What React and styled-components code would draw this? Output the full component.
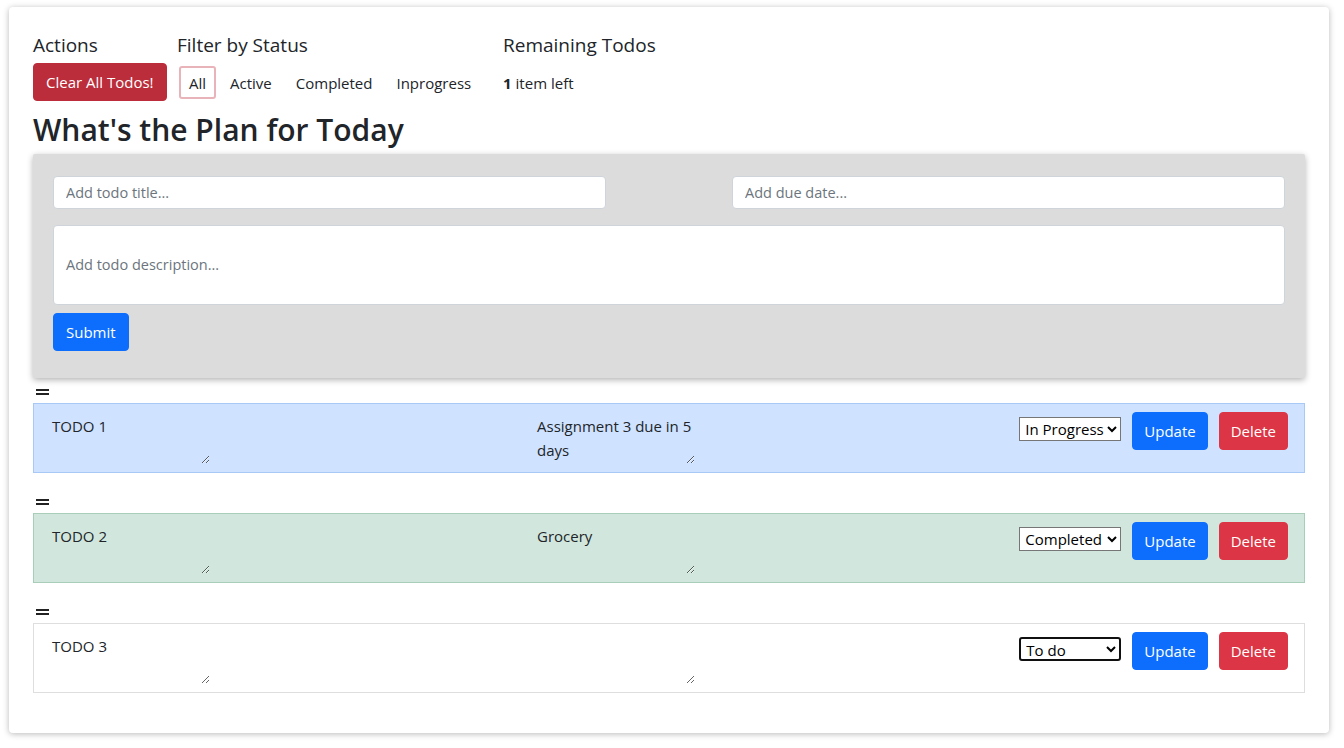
import React from "react";
import styled, { createGlobalStyle } from "styled-components";

const Global = createGlobalStyle`
  html, body { margin: 0; padding: 0; background: #ffffff; }
  body {
    font-family: "Open Sans", "Noto Sans", sans-serif;
    color: #212529;
    font-size: 15px;
  }
  * { box-sizing: border-box; }
`;

const Page = styled.div`
  padding: 7px 0 14px 9px;
`;

const Card = styled.div`
  width: 1320px;
  min-height: 726px;
  background: #fff;
  border-radius: 4px;
  box-shadow: 0 1px 6px rgba(0, 0, 0, 0.28);
  padding: 26px 24px 25px;
`;

const TopBar = styled.div`
  display: grid;
  grid-template-columns: 144px 326px auto;
`;

const Section = styled.div`
  display: flex;
  flex-direction: column;
`;

const SectionTitle = styled.h5`
  margin: 0 0 6px;
  font-size: 19px;
  font-weight: 500;
  line-height: 24px;
`;

const Button = styled.button`
  font-family: inherit;
  font-size: 15px;
  line-height: 24px;
  padding: 6px ${(p) => (p.$px ? p.$px : 12)}px;
  height: 38px;
  border-radius: 4px;
  border: 1px solid ${(p) => p.$bg};
  background: ${(p) => p.$bg};
  color: #fff;
  cursor: pointer;
  white-space: nowrap;
`;

const FilterRow = styled.div`
  display: flex;
  align-items: center;
  gap: 4px;
  height: 38px;
  padding: 1px 0 0 2px;
`;

const FilterButton = styled.button`
  font-family: inherit;
  font-size: 15px;
  color: #212529;
  background: transparent;
  height: 33px;
  padding: 0 8px;
  border-radius: 3px;
  border: 2px solid ${(p) => (p.$active ? "#e8b4b9" : "transparent")};
  cursor: pointer;
`;

const Remaining = styled.div`
  height: 38px;
  display: flex;
  align-items: center;
  padding-top: 1px;
  font-size: 15px;
  b { font-weight: 700; margin-right: 4px; }
`;

const Heading = styled.h2`
  margin: 11px 0 6px;
  font-size: 30px;
  font-weight: 600;
  line-height: 36px;
`;

const FormCard = styled.form`
  background: #dcdcdc;
  border-radius: 2px;
  box-shadow: 0 2px 6px rgba(0, 0, 0, 0.3);
  padding: 22px 20px 27px;
  display: flex;
  flex-direction: column;
`;

const InputGrid = styled.div`
  display: grid;
  grid-template-columns: 553px 553px;
  justify-content: space-between;
  margin-bottom: 16px;
`;

const Input = styled.input`
  font-family: inherit;
  font-size: 14.5px;
  height: 33px;
  padding: 4px 12px;
  border: 1px solid #ced4da;
  border-radius: 4px;
  background: #fff;
  color: #212529;
  &::placeholder { color: #6c757d; }
  outline: none;
`;

const DescArea = styled.textarea`
  font-family: inherit;
  font-size: 14.5px;
  height: 80px;
  padding: 29px 12px;
  border: 1px solid #ced4da;
  border-radius: 4px;
  background: #fff;
  resize: none;
  margin-bottom: 8px;
  outline: none;
  &::placeholder { color: #6c757d; }
`;

const SubmitRow = styled.div`
  display: flex;
`;

const List = styled.div`
  display: flex;
  flex-direction: column;
`;

const HandleRow = styled.div`
  height: 25px;
  display: flex;
  align-items: center;
  padding: 4px 0 0 3px;
`;

const Item = styled.div`
  display: flex;
  align-items: flex-start;
  height: 70px;
  padding: 8px 16px 8px 16px;
  border: 1px solid ${(p) => p.$border};
  background: ${(p) => p.$bg};
  margin-bottom: 15px;
`;

const Cell = styled.div`
  width: ${(p) => p.$w}px;
  flex: 0 0 auto;
`;

const ItemText = styled.textarea`
  font-family: inherit;
  font-size: 15px;
  line-height: 24px;
  color: #212529;
  width: 160px;
  height: 52px;
  padding: 2px;
  border: none;
  background: transparent;
  outline: none;
  overflow: hidden;
  resize: both;
`;

const Spacer = styled.div`
  flex: 1;
`;

const Select = styled.select`
  font-family: inherit;
  font-size: 15px;
  width: 102px;
  height: 24px;
  margin-top: 5px;
  margin-right: 11px;
  background: #fff;
  color: #000;
  border: ${(p) => (p.$focus ? "2px solid #101010" : "1px solid #767676")};
  border-radius: ${(p) => (p.$focus ? "3px" : "0")};
  padding: 0 0 0 1px;
`;

const Actions = styled.div`
  display: flex;
  gap: 11px;
`;

const HandleIcon = () => (
  <svg width="13" height="7" viewBox="0 0 13 7">
    <rect x="0" y="0" width="13" height="2" fill="#222" />
    <rect x="0" y="4" width="13" height="2" fill="#222" />
  </svg>
);

const todos = [
  { title: "TODO 1", desc: "Assignment 3 due in 5 days", status: "In Progress", bg: "#cfe2ff", border: "#a8c8f5" },
  { title: "TODO 2", desc: "Grocery", status: "Completed", bg: "#d1e7dd", border: "#a8cdb9" },
  { title: "TODO 3", desc: "", status: "To do", bg: "#ffffff", border: "#dedede", focus: true },
];

export default function App() {
  return (
    <Page>
      <Global />
      <Card>
        <TopBar>
          <Section>
            <SectionTitle>Actions</SectionTitle>
            <div>
              <Button type="button" $bg="#bb2d3b">Clear All Todos!</Button>
            </div>
          </Section>
          <Section>
            <SectionTitle>Filter by Status</SectionTitle>
            <FilterRow>
              <FilterButton $active>All</FilterButton>
              <FilterButton>Active</FilterButton>
              <FilterButton>Completed</FilterButton>
              <FilterButton>Inprogress</FilterButton>
            </FilterRow>
          </Section>
          <Section>
            <SectionTitle>Remaining Todos</SectionTitle>
            <Remaining><b>1</b> item left</Remaining>
          </Section>
        </TopBar>
        <Heading>What's the Plan for Today</Heading>
        <FormCard onSubmit={(e) => e.preventDefault()}>
          <InputGrid>
            <Input placeholder="Add todo title..." />
            <Input placeholder="Add due date..." />
          </InputGrid>
          <DescArea placeholder="Add todo description..." />
          <SubmitRow>
            <Button type="submit" $bg="#0d6efd">Submit</Button>
          </SubmitRow>
        </FormCard>
        <List>
          {todos.map((t) => (
            <React.Fragment key={t.title}>
              <HandleRow><HandleIcon /></HandleRow>
              <Item $bg={t.bg} $border={t.border}>
                <Cell $w={485}>
                  <ItemText defaultValue={t.title} />
                </Cell>
                <Cell $w={164}>
                  <ItemText defaultValue={t.desc} />
                </Cell>
                <Spacer />
                <Select defaultValue={t.status} $focus={t.focus}>
                  <option>To do</option>
                  <option>In Progress</option>
                  <option>Completed</option>
                </Select>
                <Actions>
                  <Button type="button" $bg="#0d6efd" $px={11}>Update</Button>
                  <Button type="button" $bg="#dc3545" $px={11}>Delete</Button>
                </Actions>
              </Item>
            </React.Fragment>
          ))}
        </List>
      </Card>
    </Page>
  );
}
